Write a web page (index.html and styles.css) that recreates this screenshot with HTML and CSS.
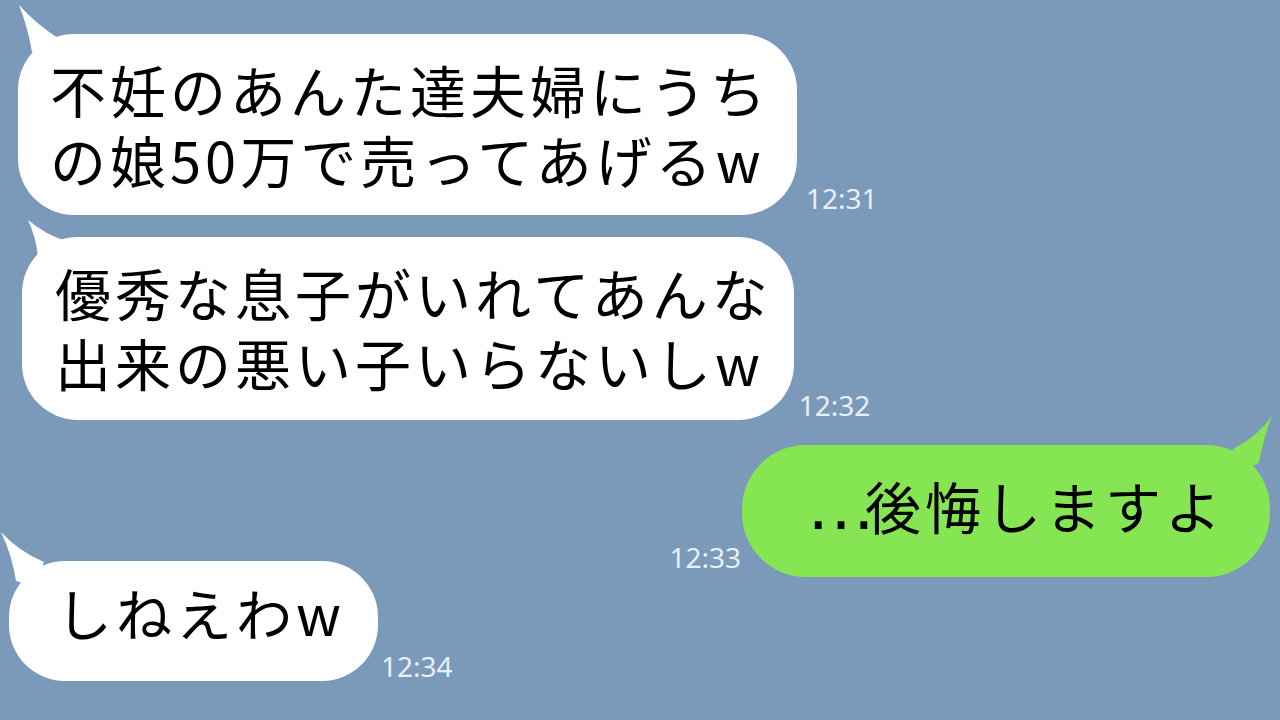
FILE: index.html
```html
<!DOCTYPE html>
<html lang="ja">
<head>
    <meta charset="UTF-8">
    <meta name="viewport" content="width=device-width, initial-scale=1.0">
    <title>トーク</title>
    <link rel="stylesheet" href="styles.css">
</head>
<body>
    <div class="chat">
        <!-- 相手 12:31 -->
        <div class="row row-1">
            <div class="bubble them">
                <svg class="tail" width="60" height="60" viewBox="0 0 60 60"><path d="M1 1 Q18 20 40 34 L34 56 L14 48 Q10 24 1 1 Z"/></svg>
                <p class="text">不妊のあんた達夫婦にうち<br>の娘50万で売ってあげるw</p>
            </div>
            <span class="time">12:31</span>
        </div>

        <!-- 相手 12:32 -->
        <div class="row row-2">
            <div class="bubble them">
                <svg class="tail short" width="60" height="50" viewBox="0 0 60 50"><path d="M6 1 Q24 16 44 22 L36 44 L16 38 Q14 18 6 1 Z"/></svg>
                <p class="text">優秀な息子がいれてあんな<br>出来の悪い子いらないしw</p>
            </div>
            <span class="time">12:32</span>
        </div>

        <!-- 自分 12:33 -->
        <div class="row row-3 me">
            <span class="time">12:33</span>
            <div class="bubble mine">
                <svg class="tail" width="60" height="60" viewBox="0 0 60 60"><path d="M59 1 Q44 22 20 34 L26 56 L46 48 Q50 24 59 1 Z"/></svg>
                <p class="text"><span class="dots">…</span>後悔しますよ</p>
            </div>
        </div>

        <!-- 相手 12:34 -->
        <div class="row row-4">
            <div class="bubble them">
                <svg class="tail" width="60" height="60" viewBox="0 0 60 60"><path d="M1 1 Q18 20 44 31 L34 56 L16 50 Q12 24 1 1 Z"/></svg>
                <p class="text">しねえわw</p>
            </div>
            <span class="time">12:34</span>
        </div>
    </div>
</body>
</html>
```

FILE: styles.css
```css
body {
    margin: 0;
    background-color: #7b9aba;
    font-family: "Noto Sans CJK JP", "Noto Sans", sans-serif;
    color: #000;
    overflow: hidden;
}

.chat {
    width: 1280px;
    height: 720px;
    display: flex;
    flex-direction: column;
}

.row {
    display: flex;
    align-items: flex-end;
}

.row.me {
    justify-content: flex-end;
}

.bubble {
    position: relative;
    background: #ffffff;
    border-radius: 56px;
}

.bubble.mine {
    background: #86e553;
    border-radius: 64px;
}

.tail {
    position: absolute;
    left: 0;
    top: -30px;
    fill: #ffffff;
}

.mine .tail {
    left: auto;
    right: -3px;
    fill: #86e553;
}

.text {
    margin: 0;
    font-size: 56px;
    line-height: 70px;
    letter-spacing: 4px;
    white-space: nowrap;
}

.dots {
    font-family: "Liberation Sans", sans-serif;
    font-size: 72px;
    letter-spacing: -12px;
    line-height: 0;
}

.time {
    font-family: "Noto Sans", sans-serif;
    font-size: 28px;
    line-height: 28px;
    color: #e8eff7;
    margin-bottom: 1px;
}

/* row placement */
.row-1 {
    margin: 34px 0 0 18px;
}

.row-1 .bubble {
    padding: 20px 27px 21px 32px;
}

.row-1 .time {
    margin-left: 9px;
    margin-bottom: 3px;
}

.row-2 {
    margin: 22px 0 0 22px;
}

.row-2 .bubble {
    padding: 20px 22px 23px 33px;
}

.row-2 .tail {
    top: -18px;
}

.row-2 .time {
    margin-left: 5px;
}

.row-3 {
    margin: 25px 10px 0 0;
}

.row-3 .bubble {
    padding: 25px 45px 37px 63px;
}

.row-3 .time {
    margin-right: 1px;
    margin-bottom: 6px;
}

.row-4 {
    margin: -16px 0 0 9px;
}

.row-4 .bubble {
    padding: 16px 33px 34px 47px;
}

.row-4 .tail {
    left: -9px;
}

.row-4 .time {
    margin-left: 3px;
}
```
